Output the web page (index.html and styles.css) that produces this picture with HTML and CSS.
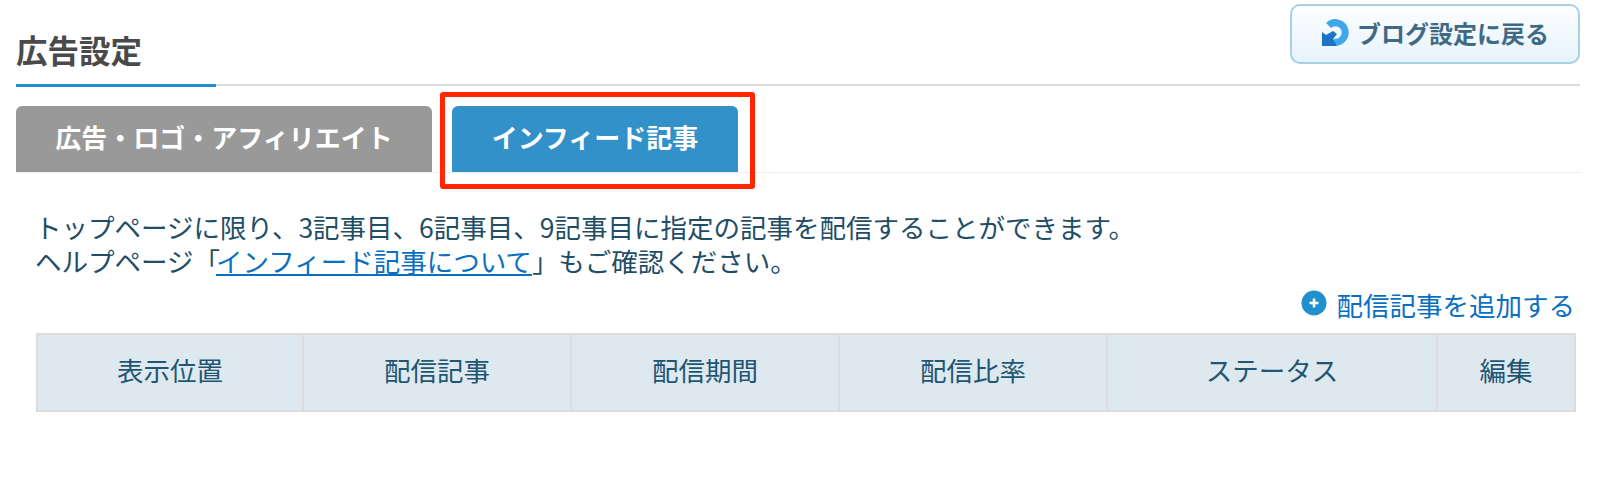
FILE: index.html
```html
<!DOCTYPE html>
<html lang="ja">
<head>
  <meta charset="UTF-8">
  <title>広告設定</title>
  <link rel="stylesheet" href="styles.css">
</head>
<body>
  <div class="page">
    <div class="page-head">
      <h1 class="page-title">広告設定</h1>
      <a class="back-button" href="#">
        <svg class="back-icon" viewBox="0 0 28 28">
          <path d="M7.5 6.5 A9.8 9.8 0 1 1 12 23" fill="none" stroke="#3fa8ea" stroke-width="7"/>
          <path d="M1 13 L5 16 L12 12 L16 15 L12 20 L16 27 L1 27 Z" fill="#1b74c4"/>
        </svg>
        <span>ブログ設定に戻る</span>
      </a>
    </div>

    <div class="tabs">
      <a class="tab" href="#">広告・ロゴ・アフィリエイト</a>
      <a class="tab tab-active" href="#">インフィード記事</a>
      <div class="tab-highlight"></div>
    </div>

    <p class="intro">
      トップページに限り、3記事目、6記事目、9記事目に指定の記事を配信することができます。<br>
      ヘルプページ「<a href="#">インフィード記事について</a>」もご確認ください。
    </p>

    <div class="add-row">
      <a class="add-link" href="#">
        <svg class="add-icon" viewBox="0 0 26 26">
          <circle cx="13" cy="13" r="12.5" fill="#1f8fce"/>
          <path d="M13 8.5 V17.5 M8.5 13 H17.5" stroke="#fff" stroke-width="2.6"/>
        </svg>
        <span>配信記事を追加する</span>
      </a>
    </div>

    <table class="ad-table">
      <colgroup>
        <col class="col-first">
        <col class="col-std">
        <col class="col-std">
        <col class="col-std">
        <col class="col-status">
        <col class="col-edit">
      </colgroup>
      <tr>
        <th>表示位置</th>
        <th>配信記事</th>
        <th>配信期間</th>
        <th>配信比率</th>
        <th>ステータス</th>
        <th>編集</th>
      </tr>
    </table>
  </div>
</body>
</html>
```

FILE: styles.css
```css
html, body {
  margin: 0;
  padding: 0;
}

body {
  height: 484px;
  overflow: hidden;
  background: #fff;
  font-family: "Noto Sans CJK JP", sans-serif;
  color: #1f4e66;
}

.page {
  width: 1564px;
  margin-left: 16px;
}

.page-head {
  position: relative;
  display: flex;
  align-items: flex-start;
  justify-content: space-between;
  height: 84px;
  border-bottom: 2px solid #dcdcdc;
}

.page-title {
  margin: 0;
  padding-top: 27px;
  width: 200px;
  height: 57px;
  font-size: 31.5px;
  line-height: 44px;
  font-weight: 700;
  color: #4a4a4a;
  border-bottom: 3px solid #1f8fce;
}

.back-button {
  display: flex;
  align-items: center;
  justify-content: center;
  gap: 8px;
  width: 290px;
  height: 60px;
  margin-top: 4px;
  padding-bottom: 3px;
  box-sizing: border-box;
  border: 2px solid #a9cfe3;
  border-radius: 10px;
  background: linear-gradient(#fdfeff, #e6f3fb);
  color: #3f6a85;
  font-size: 24px;
  font-weight: 700;
  text-decoration: none;
}

.back-icon {
  width: 28px;
  height: 28px;
}

.tabs {
  position: relative;
  display: flex;
  gap: 20px;
  margin-top: 20px;
  border-bottom: 1px solid #eee;
}

.tab {
  display: flex;
  align-items: center;
  justify-content: center;
  height: 66px;
  width: 416px;
  padding-bottom: 6px;
  box-sizing: border-box;
  border-radius: 6px 6px 0 0;
  background: #999;
  color: #fff;
  font-size: 26px;
  font-weight: 700;
  text-decoration: none;
}

.tab-active {
  width: 286px;
  background: #3291c8;
}

.tab-highlight {
  position: absolute;
  left: 424px;
  top: -14px;
  width: 315px;
  height: 97px;
  box-sizing: border-box;
  border: 5px solid #ff2600;
  border-radius: 3px;
}

.intro {
  margin: 37px 0 0 19px;
  font-size: 26.5px;
  line-height: 34px;
}

.intro a {
  margin-left: -4px;
  color: #0a6fc2;
}

.add-row {
  display: flex;
  justify-content: flex-end;
  margin-top: 9px;
  padding-right: 5px;
}

.add-link {
  display: flex;
  align-items: center;
  gap: 10px;
  color: #0a6fc2;
  font-size: 26.5px;
  line-height: 36px;
  text-decoration: none;
}

.add-icon {
  width: 26px;
  height: 26px;
  margin-bottom: 4px;
}

.ad-table {
  width: 1540px;
  margin: 10px 0 0 20px;
  border-collapse: collapse;
  table-layout: fixed;
}

.col-first {
  width: 266px;
}

.col-std {
  width: 268px;
}

.col-status {
  width: 330px;
}

.ad-table th {
  box-sizing: border-box;
  height: 77px;
  padding: 0 0 6px;
  border: 2px solid #dcdcdc;
  background: #dee8ef;
  font-size: 26.5px;
  font-weight: 400;
  color: #1f5674;
}
```
